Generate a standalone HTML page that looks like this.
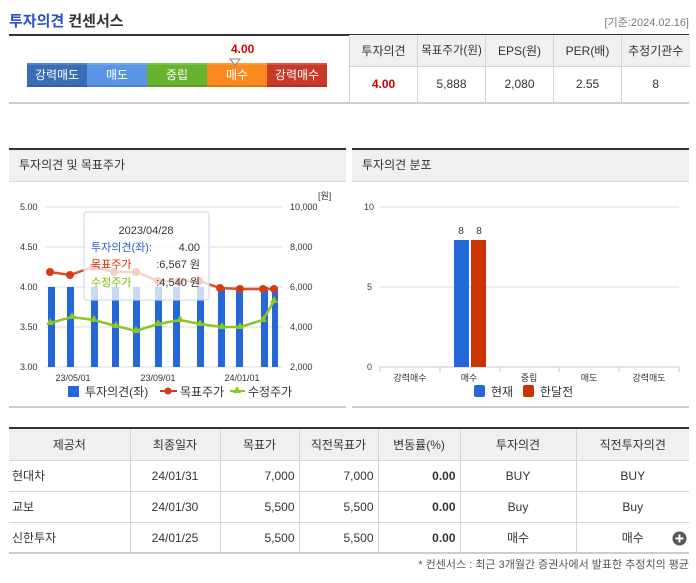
<!DOCTYPE html>
<html><head><meta charset="utf-8"><style>
*{margin:0;padding:0;box-sizing:border-box}
body{width:696px;height:583px;background:#fff;position:relative;overflow:hidden;font-family:"Liberation Sans","Noto Sans CJK KR",sans-serif;color:#333}
.a{position:absolute}
table{border-collapse:collapse;position:absolute;font-size:12px;table-layout:fixed}
td{border:1px solid #d4d4d4;text-align:center;color:#333;white-space:nowrap;overflow:hidden}
.seg{position:absolute;top:63px;height:24px;width:60px;color:#fff;font-size:12px;text-align:center;line-height:20px;border-bottom:2px solid rgba(0,0,0,.12);border-top:2px solid rgba(255,255,255,.15)}
</style></head><body>
<div class="a" style="left:9px;top:10px;font-size:15px;font-weight:bold"><span style="color:#2b4fc8">투자의견</span> <span style="color:#333">컨센서스</span></div>
<div class="a" style="right:7px;top:14px;font-size:11px;color:#777">[기준:2024.02.16]</div>
<div class="a" style="left:9px;top:34px;width:680px;height:2px;background:#333"></div>
<div class="a" style="left:231px;top:42px;font-size:12px;font-weight:bold;color:#d40000">4.00</div>
<div class="seg" style="left:27px;background:#3a6db5">강력매도</div>
<div class="seg" style="left:87px;background:#5a94e4">매도</div>
<div class="seg" style="left:147px;background:#66b42e">중립</div>
<div class="seg" style="left:207px;background:#fb8a1e">매수</div>
<div class="seg" style="left:267px;background:#c9392a">강력매수</div>
<svg class="a" style="left:229px;top:58px" width="12" height="8"><path d="M1 1H11L6 7Z" fill="#fff" stroke="#888"/></svg>
<div class="a" style="left:9px;top:102px;width:680px;height:2px;background:#ccc"></div>
<table style="left:349px;top:35px;width:340px">
<colgroup><col style="width:68px"><col style="width:68px"><col style="width:68px"><col style="width:68px"><col style="width:68px"></colgroup>
<tr style="height:31px;background:#f0f0f0"><td style="border-top:0">투자의견</td><td style="border-top:0;font-size:11.5px">목표주가(원)</td><td style="border-top:0">EPS(원)</td><td style="border-top:0">PER(배)</td><td style="border-top:0;border-right:0">추정기관수</td></tr>
<tr style="height:36px"><td style="color:#d40000;font-weight:bold">4.00</td><td>5,888</td><td>2,080</td><td>2.55</td><td style="border-right:0">8</td></tr>
</table>

<div class="a" style="left:9px;top:148px;width:337px;height:34px;background:#f0f0f0;border-top:2px solid #333;border-bottom:1px solid #ddd;font-size:12px;line-height:31px;padding-left:10px">투자의견 및 목표주가</div>
<div class="a" style="left:352px;top:148px;width:337px;height:34px;background:#f0f0f0;border-top:2px solid #333;border-bottom:1px solid #ddd;font-size:12px;line-height:31px;padding-left:10px">투자의견 분포</div>

<svg class="a" style="left:0;top:185px" width="350" height="225" font-family="Liberation Sans,Noto Sans CJK KR,sans-serif">
<g transform="translate(0,-185)">
<g stroke="#ddd"><line x1="45" x2="282" y1="207" y2="207"/><line x1="45" x2="282" y1="247" y2="247"/><line x1="45" x2="282" y1="287" y2="287"/><line x1="45" x2="282" y1="327" y2="327"/><line x1="45" x2="282" y1="367" y2="367"/></g>
<g font-size="9" fill="#333"><text x="20" y="210">5.00</text><text x="20" y="250">4.50</text><text x="20" y="290">4.00</text><text x="20" y="330">3.50</text><text x="20" y="370">3.00</text>
<text x="290" y="210">10,000</text><text x="290" y="250">8,000</text><text x="290" y="290">6,000</text><text x="290" y="330">4,000</text><text x="290" y="370">2,000</text><text x="318" y="199">[원]</text>
<text x="73" y="381" text-anchor="middle">23/05/01</text><text x="158" y="381" text-anchor="middle">23/09/01</text><text x="242" y="381" text-anchor="middle">24/01/01</text></g>
<g fill="#2467d9"><rect x="48" y="287" width="7" height="80"/><rect x="67" y="287" width="7" height="80"/><rect x="91" y="287" width="7" height="80"/><rect x="112" y="287" width="7" height="80"/><rect x="133" y="287" width="7" height="80"/><rect x="155" y="287" width="7" height="80"/><rect x="173" y="287" width="7" height="80"/><rect x="197" y="287" width="7" height="80"/><rect x="218" y="287" width="7" height="80"/><rect x="236" y="287" width="7" height="80"/><rect x="261" y="287" width="7" height="80"/><rect x="272" y="287" width="6" height="80"/></g>
<polyline fill="none" stroke="#d9532a" stroke-width="2.5" points="50,272 70,275 93,267 114,272 136,272 158,281 179,281 199,281 220,288 240,289 263,289 274,289"/>
<g fill="#d43d14"><circle cx="50" cy="272" r="4"/><circle cx="70" cy="275" r="4"/><circle cx="93" cy="267" r="4"/><circle cx="114" cy="272" r="4"/><circle cx="136" cy="272" r="4"/><circle cx="158" cy="281" r="4"/><circle cx="179" cy="281" r="4"/><circle cx="199" cy="281" r="4"/><circle cx="220" cy="288" r="4"/><circle cx="240" cy="289" r="4"/><circle cx="263" cy="289" r="4"/><circle cx="274" cy="289" r="4"/></g>
<polyline fill="none" stroke="#8cc620" stroke-width="2.5" points="50,323 72,317 94,320 116,326 136,331 158,324 180,320 200,324 222,327 240,327 263,320 274,301"/>
<g fill="#8cc620"><path d="M50 318l4 7h-8z"/><path d="M72 312l4 7h-8z"/><path d="M94 315l4 7h-8z"/><path d="M116 321l4 7h-8z"/><path d="M136 326l4 7h-8z"/><path d="M158 319l4 7h-8z"/><path d="M180 315l4 7h-8z"/><path d="M200 319l4 7h-8z"/><path d="M222 322l4 7h-8z"/><path d="M240 322l4 7h-8z"/><path d="M263 315l4 7h-8z"/><path d="M274 296l4 7h-8z"/></g>
<rect x="84" y="212" width="125" height="88" rx="3" fill="#fff" fill-opacity="0.75" stroke="#c6d6f0"/>
<g font-size="11"><text x="146" y="234" text-anchor="middle" fill="#333">2023/04/28</text>
<text x="91" y="251" fill="#2b5fd6">투자의견(좌):</text><text x="200" y="251" text-anchor="end" fill="#333">4.00</text>
<text x="91" y="268" fill="#cc3300">목표주가</text><text x="200" y="268" text-anchor="end" fill="#333">:6,567 원</text>
<text x="91" y="286" fill="#7ab800">수정주가</text><text x="200" y="286" text-anchor="end" fill="#333">:4,540 원</text></g>
<g font-size="12" fill="#333"><rect x="68" y="386" width="11" height="11" fill="#2467d9"/><text x="85" y="396">투자의견(좌)</text>
<line x1="160" x2="177" y1="391" y2="391" stroke="#d43d14" stroke-width="2"/><circle cx="168" cy="391" r="3.5" fill="#d43d14"/><text x="180" y="396">목표주가</text>
<line x1="230" x2="245" y1="391" y2="391" stroke="#8cc620" stroke-width="2"/><path d="M237 386l4 7h-8z" fill="#8cc620"/><text x="248" y="396">수정주가</text></g>
<rect x="9" y="406" width="337" height="2" fill="#ccc"/>
</g></svg>

<svg class="a" style="left:348px;top:185px" width="348" height="225" font-family="Liberation Sans,Noto Sans CJK KR,sans-serif">
<g transform="translate(-348,-185)">
<g stroke="#ddd"><line x1="380" x2="679" y1="207" y2="207"/><line x1="380" x2="679" y1="287" y2="287"/></g>
<line x1="380" x2="679" y1="367" y2="367" stroke="#c0cad8"/>
<g stroke="#c0cad8"><line x1="380" x2="380" y1="367" y2="372"/><line x1="440" x2="440" y1="367" y2="372"/><line x1="500" x2="500" y1="367" y2="372"/><line x1="559" x2="559" y1="367" y2="372"/><line x1="619" x2="619" y1="367" y2="372"/><line x1="679" x2="679" y1="367" y2="372"/></g>
<g font-size="9" fill="#333"><text x="364" y="210">10</text><text x="367" y="290">5</text><text x="367" y="370">0</text>
<text x="410" y="381" text-anchor="middle">강력매수</text><text x="469" y="381" text-anchor="middle">매수</text><text x="529" y="381" text-anchor="middle">중립</text><text x="589" y="381" text-anchor="middle">매도</text><text x="649" y="381" text-anchor="middle">강력매도</text>
<text x="461" y="234" text-anchor="middle" font-size="10">8</text><text x="479" y="234" text-anchor="middle" font-size="10">8</text></g>
<rect x="454" y="240" width="15" height="127" fill="#2467d9"/><rect x="471" y="240" width="15" height="127" fill="#cc3300"/>
<g font-size="12" fill="#333"><rect x="474" y="385" width="11" height="12" rx="2" fill="#2467d9"/><text x="491" y="396">현재</text>
<rect x="523" y="385" width="11" height="12" rx="2" fill="#cc3300"/><text x="540" y="396">한달전</text></g>
<rect x="352" y="406" width="337" height="2" fill="#ccc"/>
</g></svg>

<div class="a" style="left:9px;top:427px;width:680px;height:2px;background:#333"></div>
<table style="left:9px;top:429px;width:680px;font-size:12px">
<colgroup><col style="width:121px"><col style="width:90px"><col style="width:79px"><col style="width:79px"><col style="width:82px"><col style="width:116px"><col style="width:113px"></colgroup>
<tr style="height:31px;background:#f0f0f0"><td style="border-top:0;border-left:0">제공처</td><td style="border-top:0">최종일자</td><td style="border-top:0">목표가</td><td style="border-top:0">직전목표가</td><td style="border-top:0">변동률(%)</td><td style="border-top:0">투자의견</td><td style="border-top:0;border-right:0">직전투자의견</td></tr>
<tr style="height:31px"><td style="text-align:left;padding-left:3px;border-left:0">현대차</td><td>24/01/31</td><td style="text-align:right;padding-right:4px">7,000</td><td style="text-align:right;padding-right:4px">7,000</td><td style="text-align:right;padding-right:4px;font-weight:bold">0.00</td><td>BUY</td><td style="border-right:0">BUY</td></tr>
<tr style="height:31px"><td style="text-align:left;padding-left:3px;border-left:0">교보</td><td>24/01/30</td><td style="text-align:right;padding-right:4px">5,500</td><td style="text-align:right;padding-right:4px">5,500</td><td style="text-align:right;padding-right:4px;font-weight:bold">0.00</td><td>Buy</td><td style="border-right:0">Buy</td></tr>
<tr style="height:31px"><td style="text-align:left;padding-left:3px;border-left:0;border-bottom:0">신한투자</td><td style="border-bottom:0">24/01/25</td><td style="text-align:right;padding-right:4px;border-bottom:0">5,500</td><td style="text-align:right;padding-right:4px;border-bottom:0">5,500</td><td style="text-align:right;padding-right:4px;font-weight:bold;border-bottom:0">0.00</td><td style="border-bottom:0">매수</td><td style="border-right:0;border-bottom:0">매수</td></tr>
</table>
<div class="a" style="left:9px;top:552px;width:680px;height:2px;background:#ccc"></div>
<svg class="a" style="left:672px;top:531px" width="15" height="15"><circle cx="7.5" cy="7.5" r="7" fill="#555"/><path d="M7.5 3.5v8M3.5 7.5h8" stroke="#fff" stroke-width="2"/></svg>
<div class="a" style="right:7px;top:556px;font-size:11px;color:#555;white-space:nowrap">* 컨센서스 : 최근 3개월간 증권사에서 발표한 추정치의 평균</div>
</body></html>
